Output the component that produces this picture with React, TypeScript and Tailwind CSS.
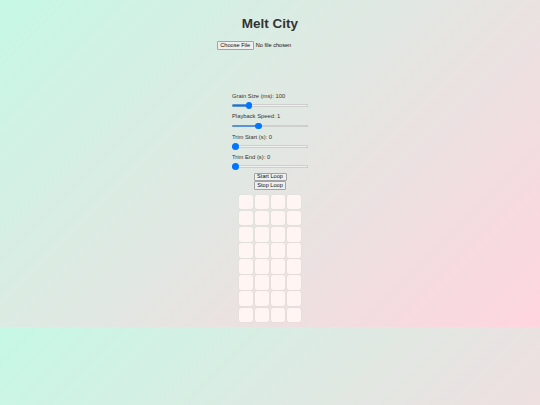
import React, { useState } from 'react';

interface SliderProps {
  label: string;
  value: number;
  min: number;
  max: number;
  step: number;
  onChange: (value: number) => void;
}

// thumb is 6.5px on a 76px track, so the fill has to stop at the thumb centre
const fillPercent = (value: number, min: number, max: number) => {
  const f = (value - min) / (max - min);
  return ((3.25 + f * 69.5) / 76) * 100;
};

const Slider: React.FC<SliderProps> = ({ label, value, min, max, step, onChange }) => {
  return (
    <div className="flex flex-col">
      <label className="text-[5.8px] leading-[7px] text-[#333]">{label}</label>
      <input
        type="range"
        min={min}
        max={max}
        step={step}
        value={value}
        onChange={(e) => onChange(Number(e.target.value))}
        style={{ '--fill': `${fillPercent(value, min, max)}%` } as React.CSSProperties}
        className="mt-[2px] block h-[7px] w-[76px] cursor-pointer appearance-none bg-transparent [&::-webkit-slider-runnable-track]:h-[2.5px] [&::-webkit-slider-runnable-track]:rounded-full [&::-webkit-slider-runnable-track]:bg-[linear-gradient(to_right,#0075ff_var(--fill),#efefef_var(--fill))] [&::-webkit-slider-runnable-track]:shadow-[inset_0_0_0_0.5px_#b0b0b0] [&::-webkit-slider-thumb]:mt-[-2px] [&::-webkit-slider-thumb]:h-[6.5px] [&::-webkit-slider-thumb]:w-[6.5px] [&::-webkit-slider-thumb]:appearance-none [&::-webkit-slider-thumb]:rounded-full [&::-webkit-slider-thumb]:bg-[#0075ff]"
      />
    </div>
  );
};

const LoopButton: React.FC<{ children: React.ReactNode; onClick: () => void }> = ({ children, onClick }) => (
  <button
    onClick={onClick}
    className="h-[8.6px] rounded-[1px] border-[0.6px] border-[#a3a3a3] bg-[#efefef] px-[2.6px] text-[5.6px] leading-none text-[#111]"
  >
    {children}
  </button>
);

export default function App() {
  const [grainSize, setGrainSize] = useState(100);
  const [speed, setSpeed] = useState(1);
  const [trimStart, setTrimStart] = useState(0);
  const [trimEnd, setTrimEnd] = useState(0);
  const [looping, setLooping] = useState(false);
  const [pads, setPads] = useState<boolean[]>(Array(32).fill(false));

  const togglePad = (i: number) => {
    setPads((prev) => prev.map((p, j) => (j === i ? !p : p)));
  };

  return (
    <div className="min-h-screen bg-[linear-gradient(135deg,#c6f8e5,#ffd5df)] bg-[length:100%_327px] bg-repeat font-['Liberation_Sans',Arial,sans-serif]">
      <div className="flex h-[327px] flex-col items-center pt-[16px]">
        <h1 className="h-[16px] text-[13.5px] font-bold leading-[16px] text-[#333]">Melt City</h1>

        <input
          type="file"
          accept="audio/*"
          className="mt-[9px] h-[8.6px] w-[107px] text-[5.6px] leading-none text-[#111] file:mr-[1.8px] file:h-[8.6px] file:rounded-[1px] file:border-[0.6px] file:border-[#a3a3a3] file:bg-[#efefef] file:px-[2.8px] file:text-[#111]"
        />

        <div className="mt-[43.6px] flex w-[76px] flex-col gap-[4.3px]">
          <Slider label={`Grain Size (ms): ${grainSize}`} value={grainSize} min={0} max={500} step={10} onChange={setGrainSize} />
          <Slider label={`Playback Speed: ${speed}`} value={speed} min={0} max={3} step={0.1} onChange={setSpeed} />
          <Slider label={`Trim Start (s): ${trimStart}`} value={trimStart} min={0} max={10} step={0.1} onChange={setTrimStart} />
          <Slider label={`Trim End (s): ${trimEnd}`} value={trimEnd} min={0} max={10} step={0.1} onChange={setTrimEnd} />
        </div>

        <div className="mt-[2.6px] flex flex-col items-center">
          <LoopButton onClick={() => setLooping(true)}>Start Loop</LoopButton>
          <LoopButton onClick={() => setLooping(false)}>Stop Loop</LoopButton>
        </div>

        <div className="mt-[5px] grid grid-cols-4 gap-[1.6px]" data-looping={looping}>
          {pads.map((active, i) => (
            <button
              key={i}
              onClick={() => togglePad(i)}
              className={
                active
                  ? 'h-[14.5px] w-[14.5px] rounded-[2px] bg-[#ffc9d6] shadow-[0_0_1px_rgba(0,0,0,0.12)]'
                  : 'h-[14.5px] w-[14.5px] rounded-[2px] bg-[#fff5f2] shadow-[0_0_1px_rgba(0,0,0,0.12)]'
              }
            />
          ))}
        </div>
      </div>
    </div>
  );
}
